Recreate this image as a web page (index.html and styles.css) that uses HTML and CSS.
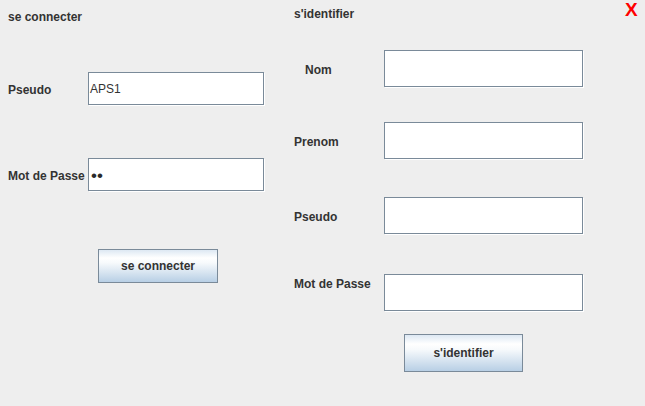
FILE: index.html
```html
<!DOCTYPE html>
<html lang="fr">
<head>
<meta charset="utf-8">
<title>Connexion</title>
<link rel="stylesheet" href="styles.css">
</head>
<body>
<div class="window">
  <section class="panel panel-left">
    <div class="title">se connecter</div>
    <div class="row row-l1">
      <label class="label label-l">Pseudo</label>
      <div class="field field-l">APS1</div>
    </div>
    <div class="row row-l2">
      <label class="label label-l">Mot de Passe</label>
      <div class="field field-l"><span class="dots">••</span></div>
    </div>
    <button class="btn btn-connect">se connecter</button>
  </section>
  <section class="panel panel-right">
    <div class="title title-r">s'identifier</div>
    <div class="row row-r1">
      <label class="label label-r label-nom">Nom</label>
      <div class="field field-r"></div>
    </div>
    <div class="row row-r2">
      <label class="label label-r">Prenom</label>
      <div class="field field-r"></div>
    </div>
    <div class="row row-r3">
      <label class="label label-r">Pseudo</label>
      <div class="field field-r"></div>
    </div>
    <div class="row row-r4 row-top">
      <label class="label label-r label-mdp">Mot de Passe</label>
      <div class="field field-r"></div>
    </div>
    <button class="btn btn-ident">s'identifier</button>
  </section>
  <span class="close">X</span>
</div>
</body>
</html>
```
FILE: styles.css
```css
* { box-sizing: border-box; }
html, body {
  margin: 0;
  padding: 0;
  background: #eeeeee;
}
body {
  width: 645px;
  height: 406px;
  overflow: hidden;
  font-family: "Liberation Sans", Arial, sans-serif;
  font-size: 12px;
  font-weight: bold;
  color: #333333;
}
.window {
  position: relative;
  display: flex;
  width: 645px;
  height: 406px;
}
.panel {
  display: flex;
  flex-direction: column;
  align-items: flex-start;
}
.panel-left {
  width: 280px;
  padding-left: 8px;
  padding-top: 10px;
}
.panel-right {
  flex: 1;
  padding-left: 14px;
  padding-top: 7px;
}
.title {
  line-height: 14px;
  height: 14px;
}
.row {
  display: flex;
  align-items: center;
}
.row-top { align-items: flex-start; }
.label {
  line-height: 14px;
  padding-top: 2px;
  white-space: nowrap;
}
.label-l { width: 80px; }
.label-r { width: 90px; }
.label-nom { padding-left: 11px; }
.label-mdp { padding-top: 3px; }

.row-l1 { margin-top: 48px; }
.row-l2 { margin-top: 53px; }
.row-r1 { margin-top: 29px; }
.row-r2 { margin-top: 35px; }
.row-r3 { margin-top: 38px; }
.row-r4 { margin-top: 40px; }

.field {
  background: #ffffff;
  border: 1px solid #7a8a99;
  box-shadow: 1px 1px 0 #ffffff;
  font-weight: normal;
  font-size: 12px;
  display: flex;
  align-items: center;
  padding-left: 1px;
  color: #333333;
}
.field-l { width: 176px; height: 33px; }
.field-r { width: 199px; height: 37px; }
.dots {
  font-size: 17px;
  line-height: 17px;
  padding-left: 1px;
  padding-top: 1px;
  color: #2a2a2a;
}

.btn {
  font-family: "Liberation Sans", Arial, sans-serif;
  font-size: 12px;
  font-weight: bold;
  color: #333333;
  border: 1px solid #7a8a99;
  border-radius: 0;
  padding: 0;
  background: linear-gradient(to bottom, #dde8f3 0%, #ffffff 25%, #f7fafc 40%, #b8cfe5 100%);
}
.btn-connect {
  margin-top: 58px;
  margin-left: 90px;
  width: 120px;
  height: 34px;
}
.btn-ident {
  margin-top: 23px;
  margin-left: 110px;
  width: 119px;
  height: 38px;
}
.close {
  position: absolute;
  top: 0;
  left: 625px;
  font-size: 19px;
  line-height: 19px;
  font-weight: bold;
  color: #ff0000;
}
```
